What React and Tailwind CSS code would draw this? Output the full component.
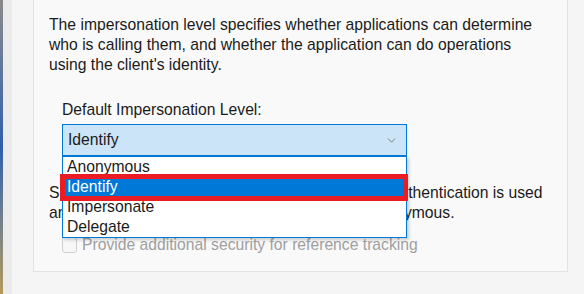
import { ChevronDown } from "lucide-react";

const items = ["Anonymous", "Identify", "Impersonate", "Delegate"];

function App() {
	return (
		<div
			className="w-[584px] h-[294px] flex overflow-hidden bg-[#f5f5f5] text-[15.7px] text-[#1b1b1b]"
			style={{ fontFamily: '"Liberation Sans", Arial, sans-serif' }}
		>
			{/* desktop edge */}
			<div className="w-[3px] h-full bg-gradient-to-b from-[#8a8a8a] via-[#2f5ea8] to-[#b39a5a]" />
			<div className="w-[9px] h-full bg-[#ebebeb]" />

			<div className="flex-1 pl-[21px] pr-[16px] pb-[22px] flex">
				<div className="relative flex-1 bg-[#f9f9f9] border-x border-b border-[#e3e3e3] pl-[15px] pt-[15px]">
					<p className="leading-[20px] whitespace-nowrap">
						The impersonation level specifies whether applications can determine
						<br />
						who is calling them, and whether the application can do operations
						<br />
						using the client's identity.
					</p>

					<div className="ml-[13px] mt-[25px]">
						<p className="leading-[20px]">Default Impersonation Level:</p>
						<div className="relative mt-[4px] w-[345px]">
							<div className="h-[32px] bg-[#cce4f7] border border-[#0078d7] flex items-center justify-between pl-[5px] pr-[8px]">
								<span>Identify</span>
								<ChevronDown className="w-[13px] h-[13px] text-[#6a6a6a]" strokeWidth={1.5} />
							</div>

							{/* open list */}
							<div className="absolute left-0 top-[32px] w-[345px] z-10 bg-white border border-[#0078d7] shadow-[2px_2px_3px_rgba(0,0,0,0.18)]">
								{items.map((it) => (
									<div
										key={it}
										className={
											it === "Identify"
												? "h-[20px] leading-[20px] pl-[4px] bg-[#0078d7] text-white"
												: "h-[20px] leading-[20px] pl-[4px]"
										}
									>
										{it}
									</div>
								))}
							</div>

							{/* highlight box */}
							<div className="absolute left-[-2px] top-[50px] w-[348px] h-[27px] border-[5px] border-[#ec1c24] z-20" />
						</div>
					</div>

					<p className="mt-[27px] leading-[20px] whitespace-nowrap">
						Security for reference tracking can be provided if authentication is used
						<br />
						and that the default impersonation level is not anonymous.
					</p>

					<div className="ml-[13px] mt-[12px] flex items-center gap-[5px] text-[#a0a0a0]">
						<span className="w-[15px] h-[16px] rounded-[3px] border border-[#cfcfcf] bg-[#f7f7f7]" />
						<span className="leading-[20px]">Provide additional security for reference tracking</span>
					</div>
				</div>
			</div>
		</div>
	);
}

export default App;
